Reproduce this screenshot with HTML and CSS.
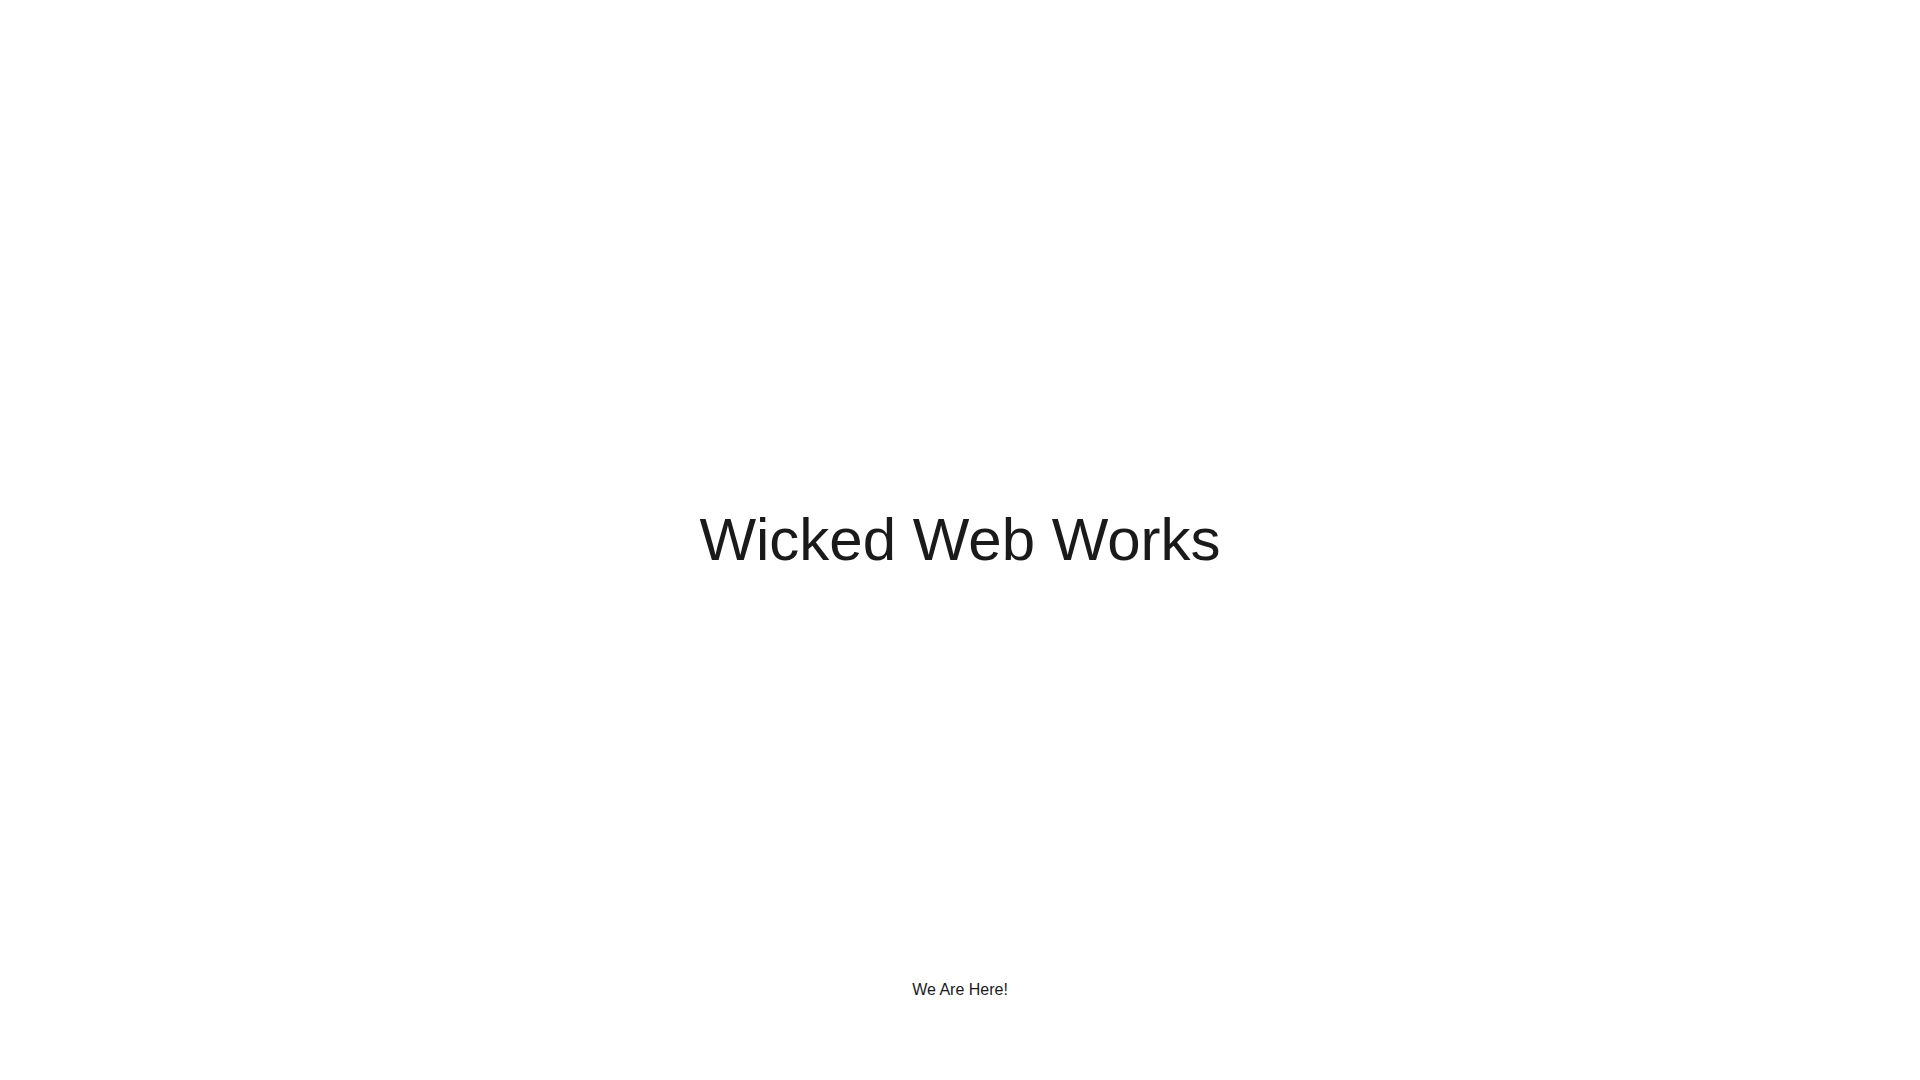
FILE: index.html
```html
<!DOCTYPE html>
<html lang="en">
<head>
<meta charset="utf-8">
<title>Wicked Web Works</title>
<link rel="stylesheet" href="styles.css">
</head>
<body>
<div class="page">
  <div class="spacer"></div>
  <main class="hero">
    <h1 class="title">Wicked Web Works</h1>
  </main>
  <footer class="footer">
    <p class="footer-text">We Are Here!</p>
  </footer>
</div>
</body>
</html>
```
FILE: styles.css
```css
html, body {
  margin: 0;
  padding: 0;
  background: #ffffff;
}
body {
  font-family: "Liberation Sans", Arial, sans-serif;
  color: #1a1a1a;
}
.page {
  height: 100vh;
  display: grid;
  grid-template-rows: 1fr auto 1fr;
}
.hero {
  display: flex;
  justify-content: center;
}
.title {
  margin: 0;
  font-size: 60px;
  line-height: 72px;
  font-weight: 400;
}
.footer {
  display: flex;
  justify-content: center;
  align-items: flex-end;
  padding-bottom: 78px;
}
.footer-text {
  margin: 0;
  font-size: 16px;
  line-height: 24px;
}
```
